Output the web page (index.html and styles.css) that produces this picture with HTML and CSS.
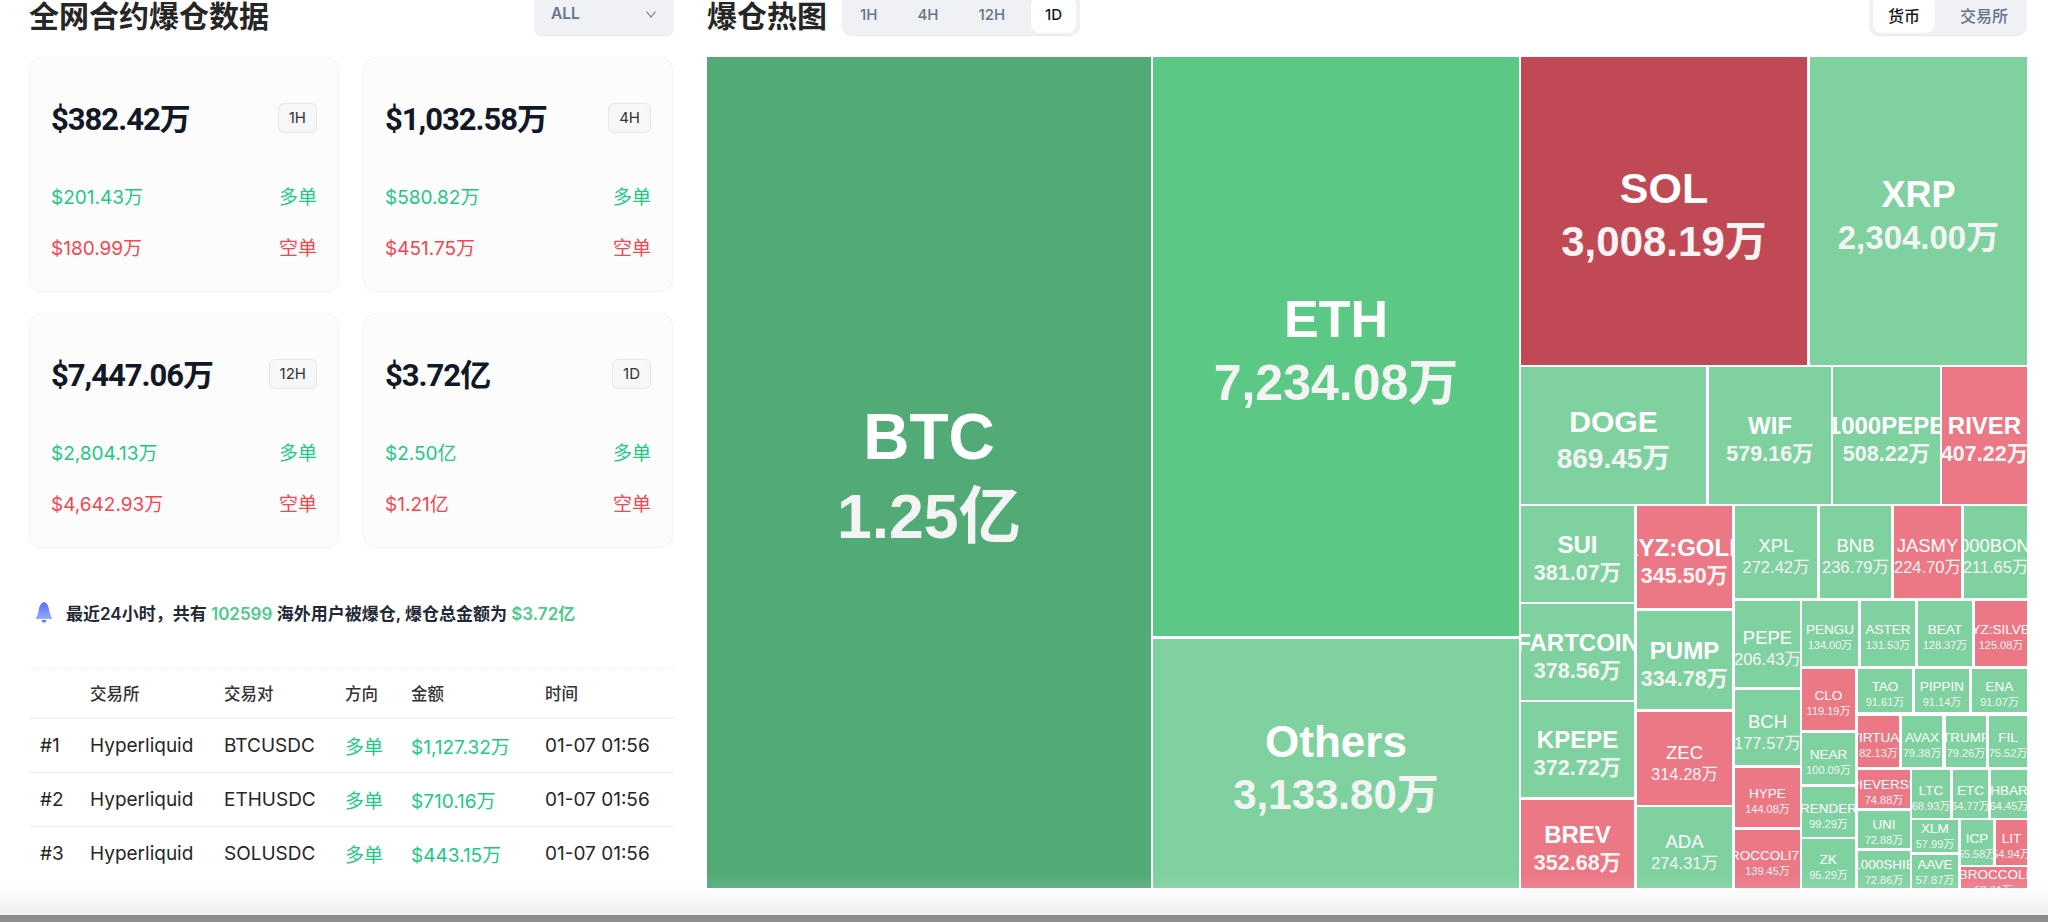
FILE: index.html
```html
<!DOCTYPE html>
<html lang="zh-CN">
<head>
    <meta charset="UTF-8">
    <meta name="viewport" content="width=device-width, initial-scale=1.0">
    <title>爆仓数据</title>
    <link rel="stylesheet" href="styles.css">
</head>
<body>
    <div class="page">
        <section class="left-panel">
            <div class="panel-header">
                <h2 class="panel-title">全网合约爆仓数据</h2>
                <div class="select-box">
                    <span>ALL</span>
                    <svg width="12" height="12" viewBox="0 0 12 12" fill="none" stroke="#64748b" stroke-width="1.1"><path d="M1.5 3.5 6 9l4.5-5.5"></path></svg>
                </div>
            </div>

            <div class="stat-grid">
                <div class="stat-card">
                    <div class="stat-top"><span class="stat-total">$382.42万</span><span class="stat-badge">1H</span></div>
                    <div class="stat-row up"><span>$201.43万</span><span>多单</span></div>
                    <div class="stat-row down"><span>$180.99万</span><span>空单</span></div>
                </div>
                <div class="stat-card">
                    <div class="stat-top"><span class="stat-total">$1,032.58万</span><span class="stat-badge">4H</span></div>
                    <div class="stat-row up"><span>$580.82万</span><span>多单</span></div>
                    <div class="stat-row down"><span>$451.75万</span><span>空单</span></div>
                </div>
                <div class="stat-card">
                    <div class="stat-top"><span class="stat-total">$7,447.06万</span><span class="stat-badge">12H</span></div>
                    <div class="stat-row up"><span>$2,804.13万</span><span>多单</span></div>
                    <div class="stat-row down"><span>$4,642.93万</span><span>空单</span></div>
                </div>
                <div class="stat-card">
                    <div class="stat-top"><span class="stat-total">$3.72亿</span><span class="stat-badge">1D</span></div>
                    <div class="stat-row up"><span>$2.50亿</span><span>多单</span></div>
                    <div class="stat-row down"><span>$1.21亿</span><span>空单</span></div>
                </div>
            </div>

            <div class="notice">
                <svg class="notice-bell" width="18" height="21" viewBox="0 0 18 21">
                    <defs>
                        <linearGradient id="bellFill" x1="0" y1="0" x2="0" y2="1">
                            <stop offset="0" stop-color="#4f6ff5"></stop>
                            <stop offset="1" stop-color="#93abff"></stop>
                        </linearGradient>
                    </defs>
                    <path d="M9 0c3 1 4.600 4 5 7.500.3 3 1.500 6.500 3.500 9.500H.5C2.500 14 3.500 10.500 3.800 7.500 4.200 4 6 1 9 0z" fill="url(#bellFill)"></path>
                    <path d="M6.500 18h5c-.4 1.800-1.300 2.800-2.500 2.800S6.900 19.800 6.500 18z" fill="#5a78f6"></path>
                </svg>
                <span>最近24小时，共有 <b class="notice-num">102599</b> 海外用户被爆仓, 爆仓总金额为 <b class="notice-num">$3.72亿</b></span>
            </div>

            <table class="liq-table">
                <colgroup>
                    <col class="col-rank"><col class="col-exchange"><col class="col-pair"><col class="col-side"><col class="col-amount"><col class="col-time">
                </colgroup>
                <thead>
                    <tr><th></th><th>交易所</th><th>交易对</th><th>方向</th><th>金额</th><th>时间</th></tr>
                </thead>
                <tbody>
                    <tr><td class="rank">#1</td><td>Hyperliquid</td><td>BTCUSDC</td><td class="up">多单</td><td class="up">$1,127.32万</td><td>01-07 01:56</td></tr>
                    <tr><td class="rank">#2</td><td>Hyperliquid</td><td>ETHUSDC</td><td class="up">多单</td><td class="up">$710.16万</td><td>01-07 01:56</td></tr>
                    <tr><td class="rank">#3</td><td>Hyperliquid</td><td>SOLUSDC</td><td class="up">多单</td><td class="up">$443.15万</td><td>01-07 01:56</td></tr>
                </tbody>
            </table>
        </section>

        <section class="right-panel">
            <div class="panel-header">
                <div class="heat-title-wrap">
                    <h2 class="panel-title">爆仓热图</h2>
                    <div class="segment">
                        <span class="segment-item">1H</span>
                        <span class="segment-item">4H</span>
                        <span class="segment-item">12H</span>
                        <span class="segment-item active">1D</span>
                    </div>
                </div>
                <div class="segment segment-cn">
                    <span class="segment-item active">货币</span>
                    <span class="segment-item">交易所</span>
                </div>
            </div>

            <div class="treemap">
                <div class="tile g1 s64" style="left:0;top:0;width:444px;height:831px"><b>BTC</b><i>1.25亿</i></div>
                <div class="tile g2 s52" style="left:446px;top:0;width:366px;height:579px"><b>ETH</b><i>7,234.08万</i></div>
                <div class="tile g3 s44" style="left:446px;top:582px;width:366px;height:249px"><b>Others</b><i>3,133.80万</i></div>
                <div class="tile r1 s43" style="left:814px;top:0;width:286px;height:308px"><b>SOL</b><i>3,008.19万</i></div>
                <div class="tile g3 s36" style="left:1103px;top:0;width:217px;height:308px"><b>XRP</b><i>2,304.00万</i></div>

                <div class="tile g3 s30" style="left:814px;top:310px;width:185px;height:137px"><b>DOGE</b><i>869.45万</i></div>
                <div class="tile g3 s24" style="left:1002px;top:310px;width:122px;height:137px"><b>WIF</b><i>579.16万</i></div>
                <div class="tile g3 s24" style="left:1126px;top:310px;width:107px;height:137px"><b>1000PEPE</b><i>508.22万</i></div>
                <div class="tile r2 s24" style="left:1235px;top:310px;width:85px;height:137px"><b>RIVER</b><i>407.22万</i></div>

                <div class="tile g3 s24" style="left:814px;top:449px;width:113px;height:96px"><b>SUI</b><i>381.07万</i></div>
                <div class="tile g3 s24" style="left:814px;top:547px;width:113px;height:96px"><b>FARTCOIN</b><i>378.56万</i></div>
                <div class="tile g3 s24" style="left:814px;top:645px;width:113px;height:95px"><b>KPEPE</b><i>372.72万</i></div>
                <div class="tile r2 s24" style="left:814px;top:743px;width:113px;height:88px"><b>BREV</b><i>352.68万</i></div>

                <div class="tile r2 s24" style="left:930px;top:449px;width:95px;height:102px"><b>XYZ:GOLD</b><i>345.50万</i></div>
                <div class="tile g3 s24" style="left:930px;top:554px;width:95px;height:98px"><b>PUMP</b><i>334.78万</i></div>
                <div class="tile r2 s18" style="left:930px;top:655px;width:95px;height:93px"><b>ZEC</b><i>314.28万</i></div>
                <div class="tile g3 s18" style="left:930px;top:750px;width:95px;height:81px"><b>ADA</b><i>274.31万</i></div>

                <div class="tile g3 s18" style="left:1028px;top:449px;width:82px;height:92px"><b>XPL</b><i>272.42万</i></div>
                <div class="tile g3 s18" style="left:1113px;top:449px;width:71px;height:92px"><b>BNB</b><i>236.79万</i></div>
                <div class="tile r2 s18" style="left:1187px;top:449px;width:67px;height:92px"><b>JASMY</b><i>224.70万</i></div>
                <div class="tile g3 s18" style="left:1257px;top:449px;width:63px;height:92px"><b>1000BONK</b><i>211.65万</i></div>

                <div class="tile g3 s18" style="left:1028px;top:544px;width:65px;height:86px"><b>PEPE</b><i>206.43万</i></div>
                <div class="tile g3 s18" style="left:1028px;top:633px;width:65px;height:75px"><b>BCH</b><i>177.57万</i></div>
                <div class="tile r2 s13" style="left:1028px;top:711px;width:65px;height:59px"><b>HYPE</b><i>144.08万</i></div>
                <div class="tile r2 s13" style="left:1028px;top:773px;width:65px;height:58px"><b>BROCCOLI714</b><i>139.45万</i></div>

                <div class="tile g3 s13" style="left:1095px;top:544px;width:56px;height:65px"><b>PENGU</b><i>134.00万</i></div>
                <div class="tile g3 s13" style="left:1154px;top:544px;width:54px;height:65px"><b>ASTER</b><i>131.53万</i></div>
                <div class="tile g3 s13" style="left:1211px;top:544px;width:54px;height:65px"><b>BEAT</b><i>128.37万</i></div>
                <div class="tile r2 s13" style="left:1268px;top:544px;width:52px;height:65px"><b>XYZ:SILVER</b><i>125.08万</i></div>

                <div class="tile r2 s13" style="left:1095px;top:612px;width:53px;height:61px"><b>CLO</b><i>119.19万</i></div>
                <div class="tile g3 s13" style="left:1095px;top:676px;width:53px;height:51px"><b>NEAR</b><i>100.09万</i></div>
                <div class="tile g3 s13" style="left:1095px;top:730px;width:53px;height:50px"><b>RENDER</b><i>99.29万</i></div>
                <div class="tile g3 s13" style="left:1095px;top:782px;width:53px;height:49px"><b>ZK</b><i>95.29万</i></div>

                <div class="tile g3 s13" style="left:1151px;top:612px;width:54px;height:43px"><b>TAO</b><i>91.61万</i></div>
                <div class="tile g3 s13" style="left:1208px;top:612px;width:54px;height:43px"><b>PIPPIN</b><i>91.14万</i></div>
                <div class="tile g3 s13" style="left:1265px;top:612px;width:55px;height:43px"><b>ENA</b><i>91.07万</i></div>

                <div class="tile r2 s13" style="left:1151px;top:659px;width:41px;height:51px"><b>VIRTUAL</b><i>82.13万</i></div>
                <div class="tile g3 s13" style="left:1195px;top:659px;width:40px;height:51px"><b>AVAX</b><i>79.38万</i></div>
                <div class="tile g3 s13" style="left:1239px;top:659px;width:40px;height:51px"><b>TRUMP</b><i>79.26万</i></div>
                <div class="tile g3 s13" style="left:1282px;top:659px;width:38px;height:51px"><b>FIL</b><i>75.52万</i></div>

                <div class="tile r2 s13" style="left:1151px;top:713px;width:52px;height:38px"><b>PIEVERSE</b><i>74.88万</i></div>
                <div class="tile g3 s13" style="left:1151px;top:754px;width:52px;height:37px"><b>UNI</b><i>72.88万</i></div>
                <div class="tile g3 s13" style="left:1151px;top:794px;width:52px;height:37px"><b>1000SHIB</b><i>72.86万</i></div>

                <div class="tile g3 s13" style="left:1205px;top:713px;width:38px;height:48px"><b>LTC</b><i>68.93万</i></div>
                <div class="tile g3 s13" style="left:1246px;top:713px;width:35px;height:48px"><b>ETC</b><i>64.77万</i></div>
                <div class="tile g3 s13" style="left:1284px;top:713px;width:36px;height:48px"><b>HBAR</b><i>64.45万</i></div>

                <div class="tile g3 s13" style="left:1205px;top:763px;width:46px;height:32px"><b>XLM</b><i>57.99万</i></div>
                <div class="tile g3 s13" style="left:1205px;top:798px;width:46px;height:33px"><b>AAVE</b><i>57.87万</i></div>
                <div class="tile g3 s13" style="left:1254px;top:763px;width:32px;height:45px"><b>ICP</b><i>55.58万</i></div>
                <div class="tile r2 s13" style="left:1289px;top:763px;width:31px;height:45px"><b>LIT</b><i>54.94万</i></div>
                <div class="tile r2 s13" style="left:1254px;top:810px;width:66px;height:21px"><b>BROCCOLI</b><i>53.61万</i></div>
            </div>
        </section>
    </div>

    <div class="bottom-fade"></div>
</body>
</html>
```

FILE: styles.css
```css
:root {
    --text-color: #111827;
    --muted-color: #64748b;
    --up-color: #20c985;
    --down-color: #f6454f;
    --segment-bg: #eff1f5;
    --line-color: #f2f3f5;
}

html, body {
    height: 100%;
}

body {
    margin: 0;
    background: #fff;
    color: var(--text-color);
    font-family: Inter, "Noto Sans CJK SC", sans-serif;
    overflow: hidden;
}

.page {
    display: grid;
    grid-template-columns: 645px 1320px;
    column-gap: 33px;
    margin-top: -8px;
    padding-left: 29px;
}

.panel-header {
    display: flex;
    align-items: center;
    justify-content: space-between;
    height: 44px;
    margin-bottom: 21px;
}

.panel-title {
    margin: 0;
    font-size: 30px;
    font-weight: 700;
    color: #262626;
}

.select-box {
    display: flex;
    align-items: center;
    justify-content: space-between;
    box-sizing: border-box;
    width: 140px;
    height: 44px;
    padding: 0 17px;
    border-bottom: 1px solid #e6e8ec;
    border-radius: 8px;
    background: var(--segment-bg);
    color: var(--muted-color);
    font-size: 15.500px;
    font-weight: 600;
}

/* stat cards */
.stat-grid {
    display: grid;
    grid-template-columns: 310px 310px;
    column-gap: 24px;
    row-gap: 21px;
}

.stat-card {
    box-sizing: border-box;
    height: 235px;
    padding: 45px 21px 0;
    border: 1px solid #f4f4f5;
    border-radius: 12px;
    background: #fcfcfc;
}

.stat-top {
    display: flex;
    align-items: center;
    justify-content: space-between;
    height: 30px;
    margin-bottom: 50px;
}

.stat-total {
    margin-top: -4px;
    font-family: Roboto, "Noto Sans CJK SC", sans-serif;
    font-size: 31px;
    font-weight: 700;
    letter-spacing: -1px;
}

.stat-badge {
    box-sizing: border-box;
    height: 30px;
    padding: 0 10px;
    border: 1px solid #e7e7e7;
    border-radius: 6px;
    background: #f7f7f7;
    color: #333;
    font-size: 15px;
    line-height: 28px;
}

.stat-row {
    display: flex;
    justify-content: space-between;
    height: 30px;
    margin-bottom: 21px;
    font-size: 19px;
    line-height: 30px;
}

.up {
    color: var(--up-color);
}

.down {
    color: var(--down-color);
}

/* notice line */
.notice {
    display: flex;
    align-items: center;
    gap: 13px;
    height: 24px;
    margin: 52px 0 44px 6px;
    color: #1f2937;
    font-size: 17px;
    font-weight: 600;
}

.notice-num {
    color: #4cc98d;
    font-weight: 600;
}

/* table */
.liq-table {
    width: 100%;
    border-collapse: collapse;
    table-layout: fixed;
    border-top: 1px solid var(--line-color);
}

.col-rank { width: 61px; }
.col-exchange { width: 134px; }
.col-pair { width: 121px; }
.col-side { width: 66px; }
.col-amount { width: 134px; }

.liq-table th {
    height: 48px;
    padding: 0;
    border-bottom: 2px solid var(--line-color);
    color: #333;
    font-size: 16.500px;
    font-weight: 500;
    text-align: left;
}

.liq-table td {
    height: 53px;
    padding: 0;
    border-bottom: 1px solid #eeeff1;
    color: #262626;
    font-size: 19px;
}

.liq-table tr:last-child td {
    border-bottom: none;
}

.liq-table td.up {
    color: var(--up-color);
}

.liq-table td.rank {
    padding-left: 11px;
}

/* heat map */
.heat-title-wrap {
    display: flex;
    align-items: center;
    gap: 15px;
}

.segment {
    display: flex;
    gap: 12px;
    box-sizing: border-box;
    height: 44px;
    padding: 4px;
    border-bottom: 1px solid #e9ebef;
    border-radius: 10px;
    background: var(--segment-bg);
    color: var(--muted-color);
    font-size: 15px;
    font-weight: 500;
}

.segment-item {
    display: flex;
    align-items: center;
    height: 37px;
    padding: 0 14px;
    border-radius: 9px;
}

.segment-item.active {
    background: #fff;
    color: var(--text-color);
}

.segment-cn {
    gap: 10px;
    font-size: 16px;
}

.segment-cn .segment-item {
    padding: 0 15px;
}

.treemap {
    position: relative;
    height: 831px;
}

.tile {
    position: absolute;
    display: flex;
    flex-direction: column;
    align-items: center;
    justify-content: safe center;
    overflow: hidden;
    color: #fff;
    font-family: "Liberation Sans", "Noto Sans CJK SC", sans-serif;
    line-height: 1.25;
    white-space: nowrap;
}

/* pushes the text slightly below centre, gives way in short tiles */
.tile::before {
    content: "";
    flex: 0 1 8px;
    min-height: 0;
}

.tile b,
.tile i {
    flex: none;
    font-style: normal;
}

.tile i {
    color: #f4f4f4;
}

.g1 { background: #52aa76; }
.g2 { background: #5cc886; }
.g3 { background: #7fd2a0; }
.r1 { background: #c14955; }
.r2 { background: #ec7885; }

.s64 b { font-size: 64px; }
.s64 i { font-size: 62.500px; font-weight: 700; }
.s52 b { font-size: 52px; }
.s52 i { font-size: 50px; font-weight: 700; }
.s44 b { font-size: 44px; }
.s44 i { font-size: 42px; font-weight: 700; }
.s43 b { font-size: 43px; }
.s43 i { font-size: 42px; font-weight: 700; }
.s36 b { font-size: 36px; }
.s36 i { font-size: 33px; font-weight: 700; }
.s30 b { font-size: 30px; }
.s30 i { font-size: 28px; font-weight: 700; }
.s24 b { font-size: 24px; }
.s24 i { font-size: 21.500px; font-weight: 700; }
.s18 b { font-size: 18.500px; font-weight: 400; }
.s18 i { font-size: 16.500px; }
.s13 b { font-size: 13.500px; font-weight: 400; }
.s13 i { font-size: 11px; }

/* soft edge at the bottom of the window */
.bottom-fade {
    position: fixed;
    left: 0;
    right: 0;
    bottom: 0;
    height: 49px;
    background: linear-gradient(to bottom, rgba(238, 238, 238, 0) 0, rgba(238, 238, 238, 0.1) 15px, #eeeeee 42px, #8a8a8a 42px, #8f8f8f 100%);
}
```
